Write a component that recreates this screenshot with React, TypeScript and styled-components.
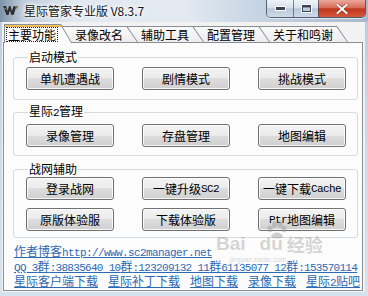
import React from 'react';
import styled, { createGlobalStyle } from 'styled-components';

const Global = createGlobalStyle`
  html, body { margin: 0; padding: 0; width: 368px; height: 296px; overflow: hidden; }
  body { font-family: "Noto Sans CJK SC", "Liberation Sans", sans-serif; font-size: 12px; }
  * { box-sizing: border-box; }
`;

const Window = styled.div`
  position: relative;
  width: 368px;
  height: 296px;
  display: flex;
  flex-direction: column;
  background: linear-gradient(to bottom, #b9cadd, #c9d8ea 40%, #d5e2f0);
  overflow: hidden;
`;

const TitleBar = styled.div`
  height: 22px;
  flex: none;
  display: flex;
  align-items: flex-start;
  background: linear-gradient(90deg, #7f93a9 0, #bccada 6%, #e1e8f0 20%, #e3eaf2 50%, #c9d6e4 68%, #a7b9cd 100%);
`;

const AppIcon = styled.svg`
  flex: none;
  margin: 5px 0 0 3px;
`;

const Title = styled.div`
  margin: 3px 0 0 6px;
  font-size: 12px;
  line-height: 15px;
  color: #141414;
  white-space: nowrap;
  text-shadow: 0 0 3px #fff, 0 0 5px #fff, 0 0 7px #fff;
`;

const CaptionGroup = styled.div`
  margin-left: auto;
  margin-right: 2px;
  display: flex;
  height: 18px;
  border: 1px solid rgba(46, 60, 82, 0.75);
  border-top: none;
  border-radius: 0 0 5px 5px;
  overflow: hidden;
  box-shadow: 0 1px 0 rgba(255, 255, 255, 0.55);
`;

const CapBtn = styled.div<{ $w: number; $close?: boolean }>`
  width: ${p => p.$w}px;
  height: 100%;
  display: flex;
  align-items: center;
  justify-content: center;
  background: ${p =>
    p.$close
      ? 'linear-gradient(to bottom, #eaa99b 0%, #d86c5a 45%, #c1371f 52%, #d4573c 100%)'
      : 'linear-gradient(to bottom, #eef3f8 0%, #d7e1ec 45%, #b9c8d9 52%, #cfdbe8 100%)'};
  & + & {
    border-left: 1px solid rgba(46, 60, 82, 0.6);
  }
`;

const Client = styled.div`
  flex: 1;
  margin: 0 3px 4px 2px;
  padding-top: 2px;
  background: #f2f2f2;
  display: flex;
  flex-direction: column;
`;

const TabStrip = styled.div`
  position: relative;
  z-index: 1;
  height: 19px;
  margin-bottom: -1px;
  padding-left: 2px;
  display: flex;
  align-items: flex-end;
`;

const TabShape = styled.div<{ $active?: boolean; $z: number }>`
  position: relative;
  z-index: ${p => (p.$active ? 20 : p.$z)};
  flex: none;
  height: ${p => (p.$active ? 19 : 16)}px;
  margin-bottom: ${p => (p.$active ? 0 : 1)}px;
  margin-right: -11px;
  padding: 1px 1px 0 1px;
  background: #8a8e96;
  clip-path: polygon(0 0, calc(100% - 11px) 0, 100% 100%, 0 100%);
`;

const TabFace = styled.div<{ $active?: boolean; $first?: boolean }>`
  height: 100%;
  padding: 0 14px 0 ${p => (p.$first ? 2 : 13)}px;
  display: flex;
  align-items: center;
  clip-path: polygon(0 0, calc(100% - 10.5px) 0, 100% 100%, 0 100%);
  background: ${p =>
    p.$active
      ? 'linear-gradient(to bottom, #f7cf72 0, #e6a040 2px, #fdfdfd 2px, #fcfcfc 100%)'
      : 'linear-gradient(to bottom, #fafafa, #ededed)'};
  font-size: 12px;
  line-height: 13px;
  color: #000;
  white-space: nowrap;
`;

const FocusText = styled.span`
  padding: 0 1px;
  outline: 1px dotted #222;
`;

const Panel = styled.div`
  flex: 1;
  margin: 0 2px 1px 1px;
  border: 1px solid #8a8e96;
  background: #fcfcfc;
  padding: 0 4px 0 9px;
  display: flex;
  flex-direction: column;
`;

const Group = styled.fieldset<{ $mt: number; $pt: number; $pb: number }>`
  margin: ${p => p.$mt}px 0 0 0;
  padding: ${p => p.$pt}px 0 ${p => p.$pb}px 12px;
  border: 1px solid #d5dadf;
  border-radius: 3px;
  min-inline-size: 0;
`;

const Legend = styled.legend`
  margin-left: 2px;
  padding: 0 1px;
  font-size: 12px;
  line-height: 12px;
  color: #000;
`;

const ButtonGrid = styled.div`
  display: grid;
  grid-template-columns: repeat(3, 88px);
  column-gap: 28px;
  row-gap: 8px;
`;

const Btn = styled.button`
  width: 88px;
  height: 23px;
  padding: 0;
  display: flex;
  align-items: center;
  justify-content: center;
  font-family: "Noto Sans CJK SC", "Liberation Sans", sans-serif;
  font-size: 12px;
  color: #000;
  white-space: nowrap;
  border: 1px solid #707070;
  border-radius: 3px;
  background: linear-gradient(to bottom, #f3f3f3 0%, #ebebeb 50%, #dddddd 50%, #cfcfcf 100%);
  box-shadow: inset 0 0 0 1px rgba(255, 255, 255, 0.8);
`;

const Lat = styled.span<{ $tight?: boolean }>`
  font-family: "Liberation Mono", monospace;
  font-size: 11px;
  letter-spacing: ${p => (p.$tight ? -0.7 : -0.6)}px;
  white-space: pre;
`;

const Links = styled.div`
  margin: 5px 0 0 1px;
  display: flex;
  flex-direction: column;
`;

const LinkLine = styled.div`
  display: flex;
  gap: 10px;
  height: 15px;
  line-height: 15px;
  white-space: nowrap;
  overflow: visible;
`;

const Link = styled.a`
  display: inline-block;
  height: 15px;
  line-height: 15px;
  overflow: visible;
  color: #2d6ab4;
  text-decoration: underline;
  text-underline-offset: 1px;
  font-size: 12px;
`;

const Watermark = styled.div`
  position: absolute;
  left: 216px;
  top: 221px;
  width: 122px;
  height: 46px;
  pointer-events: none;
  color: rgba(150, 150, 150, 0.4);
  font-family: "Liberation Sans", sans-serif;
  font-weight: bold;
`;

const WmRow = styled.div`
  display: flex;
  align-items: flex-end;
  margin-top: 14px;
  font-size: 19px;
  line-height: 18px;
  height: 18px;
`;

const WmCjk = styled.span`
  font-family: "Noto Sans CJK SC", sans-serif;
  font-size: 18px;
  line-height: 18px;
  margin-left: 4px;
`;

const WmGap = styled.span`
  margin-left: 14px;
`;

const WmPaw = styled.svg`
  position: absolute;
  left: 50px;
  top: 0;
`;

const WmSub = styled.div`
  font-size: 7px;
  line-height: 8px;
  margin: 3px 0 0 14px;
  font-weight: normal;
`;

const group1: React.ReactNode[] = ['单机遭遇战', '剧情模式', '挑战模式'];
const group2: React.ReactNode[] = ['录像管理', '存盘管理', '地图编辑'];
const group3: React.ReactNode[] = [
  '登录战网',
  <>一键升级<Lat>SC2</Lat></>,
  <>一键下载<Lat>Cache</Lat></>,
  '原版体验服',
  '下载体验版',
  <><Lat>Ptr</Lat>地图编辑</>,
];

const tabs = ['主要功能', '录像改名', '辅助工具', '配置管理', '关于和鸣谢'];

export default function App() {
  return (
    <Window>
      <Global />
      <TitleBar>
        <AppIcon width="15" height="11" viewBox="0 0 15 11">
          <path d="M0 1 L3 1 L4.5 6 L6 1 L7.5 1 L9 6 L10.5 1 L13.5 1 L10.5 10 L8.5 10 L7 5.5 L5.5 10 L3.5 10 Z" fill="#2e2e30" />
          <path d="M11 1 L15 1 L14 4 Z" fill="#8a6d45" />
          <path d="M1 3 L3 3 L2.5 5 Z" fill="#b08a5a" />
        </AppIcon>
        <Title>星际管家专业版 V8.3.7</Title>
        <CaptionGroup>
          <CapBtn $w={26}>
            <svg width="11" height="5" viewBox="0 0 11 5">
              <rect x="0.5" y="0.5" width="10" height="4" fill="#3b4350" stroke="#fff" />
            </svg>
          </CapBtn>
          <CapBtn $w={25}>
            <svg width="11" height="9" viewBox="0 0 11 9">
              <rect x="0.5" y="0.5" width="10" height="8" fill="none" stroke="#fff" />
              <rect x="1.5" y="1.5" width="8" height="6" fill="none" stroke="#3b4350" />
              <rect x="2" y="2" width="7" height="1.5" fill="#3b4350" />
            </svg>
          </CapBtn>
          <CapBtn $w={47} $close>
            <svg width="12" height="10" viewBox="0 0 12 10">
              <path d="M1.5 1 L10.5 9 M10.5 1 L1.5 9" stroke="#5a1a10" strokeWidth="3.2" strokeLinecap="square" opacity="0.55" />
              <path d="M1.5 1 L10.5 9 M10.5 1 L1.5 9" stroke="#fff" strokeWidth="2" strokeLinecap="square" />
            </svg>
          </CapBtn>
        </CaptionGroup>
      </TitleBar>
      <Client>
        <TabStrip>
          {tabs.map((t, i) => (
            <TabShape key={t} $active={i === 0} $z={10 - i}>
              <TabFace $active={i === 0} $first={i === 0}>
                {i === 0 ? <FocusText>{t}</FocusText> : t}
              </TabFace>
            </TabShape>
          ))}
        </TabStrip>
        <Panel>
          <Group $mt={8} $pt={4} $pb={9}>
            <Legend>启动模式</Legend>
            <ButtonGrid>
              {group1.map((b, i) => <Btn key={i}>{b}</Btn>)}
            </ButtonGrid>
          </Group>
          <Group $mt={5} $pt={5} $pb={8}>
            <Legend>星际<Lat>2</Lat>管理</Legend>
            <ButtonGrid>
              {group2.map((b, i) => <Btn key={i}>{b}</Btn>)}
            </ButtonGrid>
          </Group>
          <Group $mt={7} $pt={2} $pb={6}>
            <Legend>战网辅助</Legend>
            <ButtonGrid>
              {group3.map((b, i) => <Btn key={i}>{b}</Btn>)}
            </ButtonGrid>
          </Group>
          <Links>
            <LinkLine>
              <Link>作者博客<Lat>http://www.sc2manager.net</Lat></Link>
            </LinkLine>
            <LinkLine>
              <Link>
                <Lat $tight>QQ 3</Lat>群<Lat $tight>:38835640 10</Lat>群<Lat $tight>:123209132 11</Lat>群<Lat $tight>61135077 12</Lat>群<Lat $tight>:153570114</Lat>
              </Link>
            </LinkLine>
            <LinkLine>
              <Link>星际客户端下载</Link>
              <Link>星际补丁下载</Link>
              <Link>地图下载</Link>
              <Link>录像下载</Link>
              <Link>星际<Lat>2</Lat>贴吧</Link>
            </LinkLine>
          </Links>
        </Panel>
      </Client>
      <Watermark>
        <WmPaw width="22" height="18" viewBox="0 0 22 18">
          <g fill="rgba(150,150,150,0.45)">
            <ellipse cx="4" cy="8" rx="2.6" ry="3.2" />
            <ellipse cx="8.5" cy="3.5" rx="2.6" ry="3.2" />
            <ellipse cx="14" cy="3.5" rx="2.6" ry="3.2" />
            <ellipse cx="18" cy="8" rx="2.6" ry="3.2" />
            <path d="M5 16 C6 10 16 10 17 16 C14 18 8 18 5 16 Z" />
          </g>
        </WmPaw>
        <WmRow>
          <span>Bai</span>
          <WmGap>du</WmGap>
          <WmCjk>经验</WmCjk>
        </WmRow>
        <WmSub>jingyan.baidu.com</WmSub>
      </Watermark>
    </Window>
  );
}
